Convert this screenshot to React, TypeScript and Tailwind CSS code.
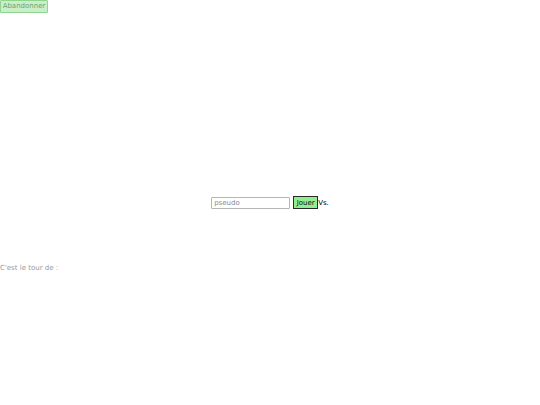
export default function App() {
  return (
    <div className="w-[540px] h-[405px] bg-white" style={{ fontFamily: '"DejaVu Sans", sans-serif' }}>
      <div className="flex">
        <button className="h-[13px] w-[48px] px-[2px] text-[7px] leading-none bg-[#c9efc9] border border-[#8fd48f] text-[#6f9f6f] rounded-[1px] flex items-center justify-center" disabled>
          Abandonner
        </button>
      </div>
      <div className="mt-[183px] flex justify-center items-center">
        <input
          className="w-[79px] h-[12px] text-[7px] px-[2px] border border-[#b5b5b5] text-black placeholder:text-[#8a8a8a] outline-none rounded-[1px]"
          placeholder="pseudo"
        />
        <button className="ml-[3px] h-[13px] w-[25px] pt-[1px] text-[7px] leading-none bg-[#90ee90] border border-[#2a2a2a] text-[#111] flex items-center justify-center">
          Jouer
        </button>
        <span className="mt-[1px] text-[7px] text-black leading-none">Vs.</span>
      </div>
      <div className="mt-[55px] text-[7px] text-[#9a9a9a] leading-[9px]">C'est le tour de :</div>
    </div>
  );
}
